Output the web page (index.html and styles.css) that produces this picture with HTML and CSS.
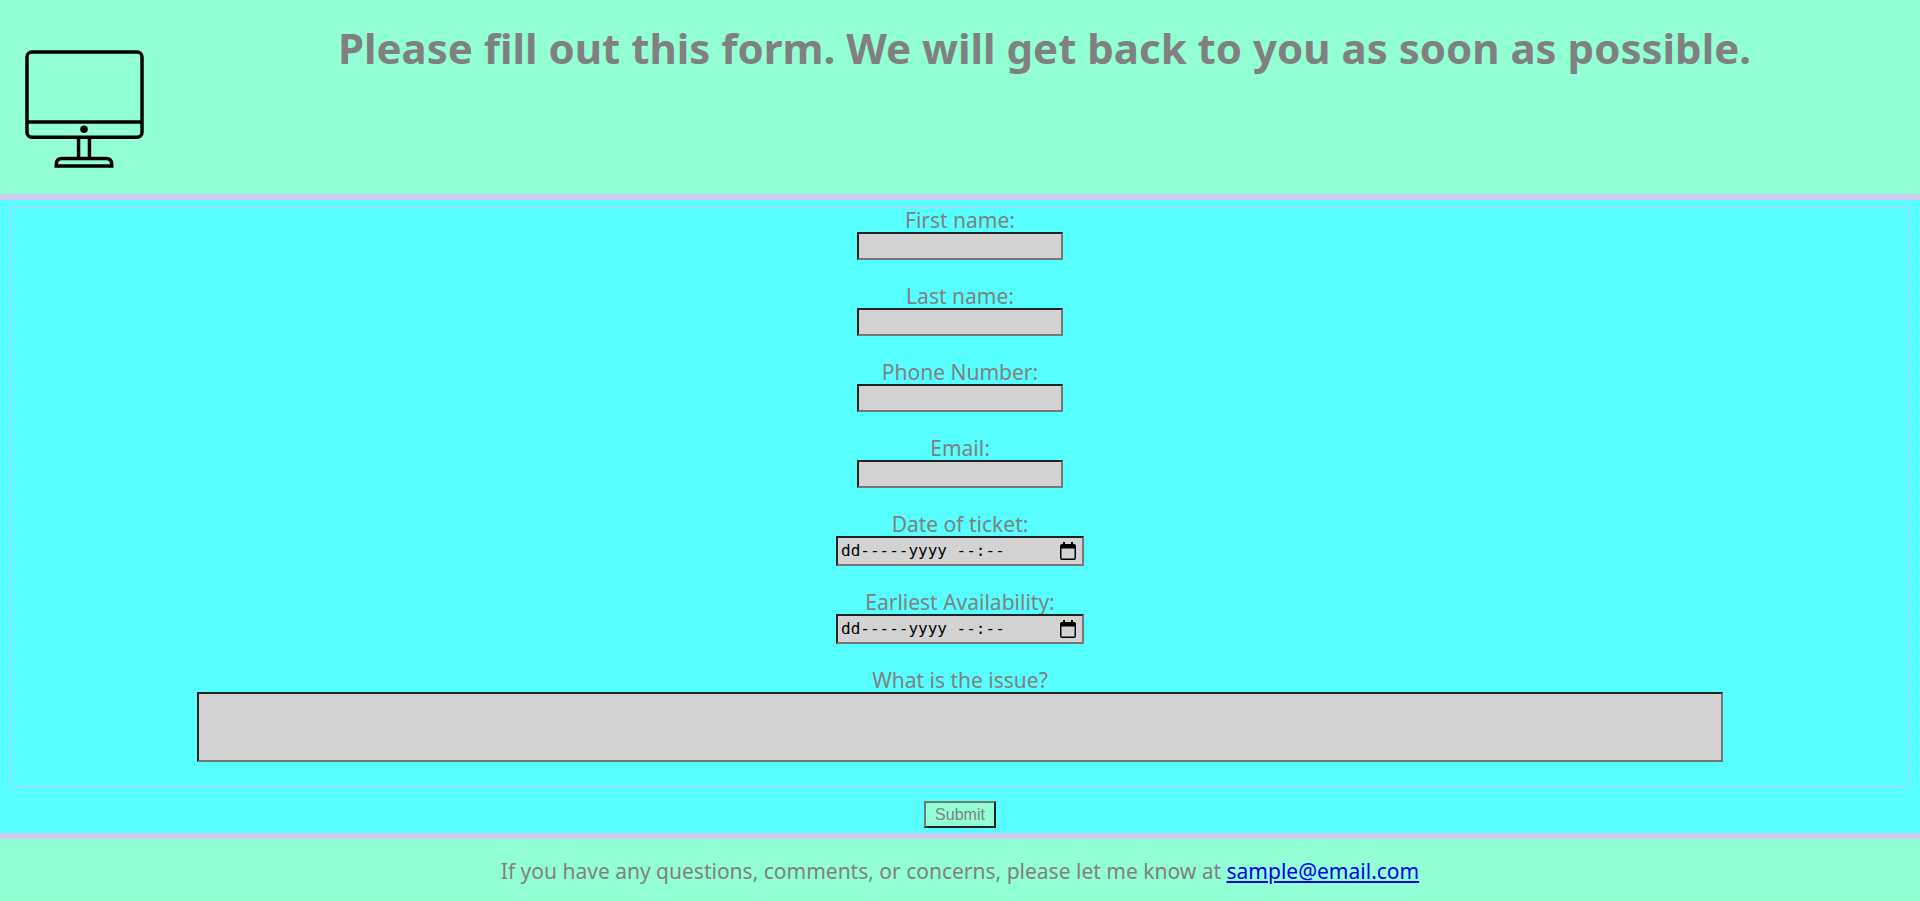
FILE: index.html
```html
<!DOCTYPE html>
<html lang="en">
<head>
<meta charset="utf-8">
<title>Support ticket</title>
<link rel="stylesheet" href="styles.css">
</head>
<body>
<header class="header">
  <svg class="logo" viewBox="0 0 120 120" fill="none" stroke="#000" stroke-width="3.5" aria-hidden="true">
    <rect x="2" y="2" width="116" height="86" rx="5"/>
    <path d="M2 72.500H118M54 88V109M65 88V109"/>
    <circle cx="59.500" cy="80" r="3.800" fill="#000" stroke="none"/>
    <path d="M31.500 117V115Q32 109.500 37 109.500H82Q87 109.500 87.500 115V117Z"/>
  </svg>
  <h1 class="title">Please fill out this form. We will get back to you as soon as possible.</h1>
</header>
<main class="main">
  <form class="form">
    <div class="fields">
      <div class="field"><label for="first">First name:</label><input class="text" id="first" type="text"></div>
      <div class="field"><label for="last">Last name:</label><input class="text" id="last" type="text"></div>
      <div class="field"><label for="phone">Phone Number:</label><input class="text" id="phone" type="tel"></div>
      <div class="field"><label for="email">Email:</label><input class="text" id="email" type="email"></div>
      <div class="field"><label for="ticket">Date of ticket:</label>
        <div class="date"><input class="date-text" id="ticket" type="text" value="dd-----yyyy --:--"><button class="picker" type="button" aria-label="Pick ticket date"><svg class="calendar" viewBox="0 0 16 18" aria-hidden="true"><path fill-rule="evenodd" d="M3 0H5V2H11V0H13V2H14Q16 2 16 4V16Q16 18 14 18H2Q0 18 0 16V4Q0 2 2 2H3ZM1.500 6.500V16.500H14.500V6.500Z"/></svg></button></div>
      </div>
      <div class="field"><label for="available">Earliest Availability:</label>
        <div class="date"><input class="date-text" id="available" type="text" value="dd-----yyyy --:--"><button class="picker" type="button" aria-label="Pick availability date"><svg class="calendar" viewBox="0 0 16 18" aria-hidden="true"><path fill-rule="evenodd" d="M3 0H5V2H11V0H13V2H14Q16 2 16 4V16Q16 18 14 18H2Q0 18 0 16V4Q0 2 2 2H3ZM1.500 6.500V16.500H14.500V6.500Z"/></svg></button></div>
      </div>
      <div class="field"><label for="issue">What is the issue?</label><textarea class="issue" id="issue"></textarea></div>
    </div>
    <button class="submit" type="submit">Submit</button>
  </form>
</main>
<footer class="footer">If you have any questions, comments, or concerns, please let me know at <a class="mail" href="mailto:sample@email.com">sample@email.com</a></footer>
</body>
</html>
```
FILE: styles.css
```css
* { box-sizing: border-box; }

body {
  margin: 0;
  min-height: 100vh;
  display: flex;
  flex-direction: column;
  background: #93ffd4;
  color: #808080;
  font: 21px/24px "Noto Sans", sans-serif;
}

.header {
  display: flex;
  align-items: flex-start;
  border-bottom: 6px solid #ccccf0;
}

.logo {
  flex: none;
  width: 119px;
  height: 119px;
  margin: 50px 25px 25px;
}

.title {
  flex: 1;
  margin: 24px 0 0;
  text-align: center;
  font-size: 42px;
  line-height: 48px;
}

.main {
  padding: 6px 10px 5px;
  background: #57ffff;
  border-bottom: 6px solid #ccccf0;
}

.form {
  display: flex;
  flex-direction: column;
  align-items: center;
  gap: 13px;
}

.fields {
  width: 100%;
  display: flex;
  flex-direction: column;
  gap: 24px;
  padding-bottom: 24px;
  border: 2px dotted #ccccf0;
}

.field {
  display: flex;
  flex-direction: column;
  align-items: center;
}

.text, .date, .issue {
  background: #d3d3d3;
  border: 2px inset #767676;
  border-radius: 0;
}

.text {
  width: 206px;
  height: 28px;
}

.date {
  display: flex;
  align-items: center;
  justify-content: space-between;
  width: 248px;
  height: 30px;
  padding: 0 6px 0 3px;
}

.date-text {
  width: 190px;
  padding: 0;
  border: 0;
  background: none;
  color: #000;
  font: 16px/24px "DejaVu Sans Mono", monospace;
}

.picker {
  display: flex;
  padding: 0;
  border: 0;
  background: none;
}

.calendar {
  width: 16px;
  height: 18px;
}

.issue {
  width: 80.5%;
  height: 70px;
  resize: none;
}

.submit {
  padding: 0 9px;
  height: 27px;
  background: #93ffd4;
  border: 2px outset #767676;
  color: #808080;
  font: 16px/20px "Liberation Sans", Arial, sans-serif;
}

.footer {
  padding: 20px 16px 18px;
  text-align: center;
}

.mail { color: #0000ee; }
```
